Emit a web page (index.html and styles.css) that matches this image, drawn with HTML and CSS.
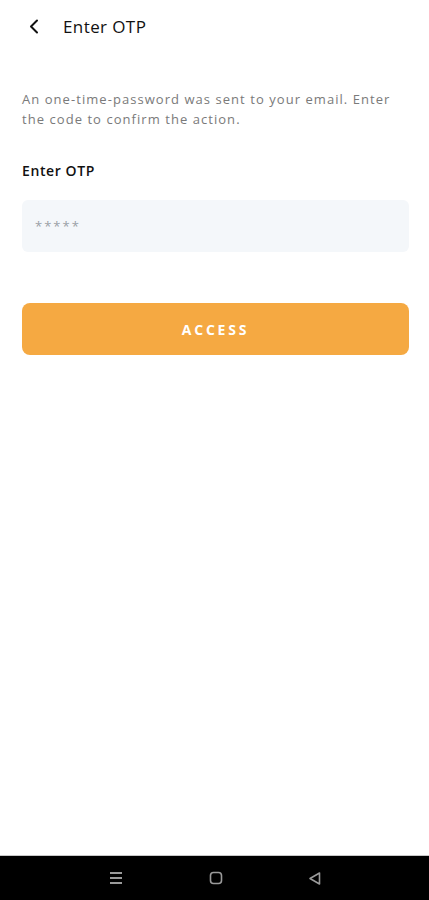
FILE: index.html
```html
<!DOCTYPE html>
<html lang="en">
<head>
    <meta charset="UTF-8">
    <meta name="viewport" content="width=device-width, initial-scale=1.0">
    <title>Enter OTP</title>
    <link rel="stylesheet" href="styles.css">
</head>
<body>
    <div class="screen">
        <div class="content">
            <header class="top-bar">
                <button class="back" type="button" aria-label="Back">
                    <svg width="10" height="15" viewBox="0 0 10 15" fill="none">
                        <path d="M8 1.5L2 7.5L8 13.5" stroke="#111" stroke-width="2" stroke-linecap="round" stroke-linejoin="round"/>
                    </svg>
                </button>
                <h1>Enter OTP</h1>
            </header>

            <p class="info">An one-time-password was sent to your email. Enter the code to confirm the action.</p>

            <form class="otp-form">
                <label for="otp">Enter OTP</label>
                <input type="password" id="otp" name="otp" placeholder="*****">
                <button type="submit" class="access">ACCESS</button>
            </form>
        </div>

        <nav class="nav-bar">
            <svg width="16" height="14" viewBox="0 0 16 14">
                <path d="M2 2H14M2 7H14M2 12H14" stroke="#9a9a9a" stroke-width="2"/>
            </svg>
            <svg width="14" height="14" viewBox="0 0 14 14">
                <rect x="1.5" y="1.5" width="11" height="11" rx="3" fill="none" stroke="#9a9a9a" stroke-width="1.6"/>
            </svg>
            <svg width="14" height="15" viewBox="0 0 14 15">
                <path d="M2 7.5L11.5 2V13Z" fill="none" stroke="#9a9a9a" stroke-width="1.6" stroke-linejoin="round"/>
            </svg>
        </nav>
    </div>
</body>
</html>
```

FILE: styles.css
```css
body {
    margin: 0;
    font-family: "Open Sans", "Liberation Sans", sans-serif;
    background-color: #fff;
}
.screen {
    display: flex;
    flex-direction: column;
    height: 900px;
}
.content {
    flex: 1;
    padding: 0 20px 0 22px;
}
.top-bar {
    display: flex;
    align-items: center;
    height: 52px;
}
.back {
    display: flex;
    align-items: center;
    padding: 0;
    margin-left: 7px;
    border: none;
    background: none;
}
.top-bar h1 {
    margin: 0 0 0 24px;
    font-size: 17px;
    font-weight: 400;
    letter-spacing: 0.4px;
    color: #111;
}
.info {
    margin: 37px 0 0;
    font-size: 13px;
    line-height: 20px;
    letter-spacing: 1.05px;
    color: #7a7a7a;
}
.otp-form label {
    display: block;
    margin-top: 32px;
    font-size: 14px;
    font-weight: 600;
    letter-spacing: 0.6px;
    color: #111;
}
.otp-form input {
    display: block;
    box-sizing: border-box;
    width: 100%;
    height: 52px;
    margin-top: 20px;
    padding: 0 13px;
    border: none;
    border-radius: 6px;
    background-color: #f4f7fa;
    font-family: inherit;
    font-size: 13px;
}
.otp-form input::placeholder {
    color: #9aa0a6;
    letter-spacing: 2px;
}
.access {
    display: block;
    width: 100%;
    height: 52px;
    margin-top: 51px;
    border: none;
    border-radius: 8px;
    background-color: #f5a942;
    color: #fff;
    font-family: inherit;
    font-size: 14px;
    font-weight: 700;
    letter-spacing: 2.8px;
}
.nav-bar {
    display: flex;
    justify-content: center;
    align-items: center;
    gap: 85px;
    height: 44px;
    background-color: #000;
    border-top: 1px solid #c8c8c8;
}
```
